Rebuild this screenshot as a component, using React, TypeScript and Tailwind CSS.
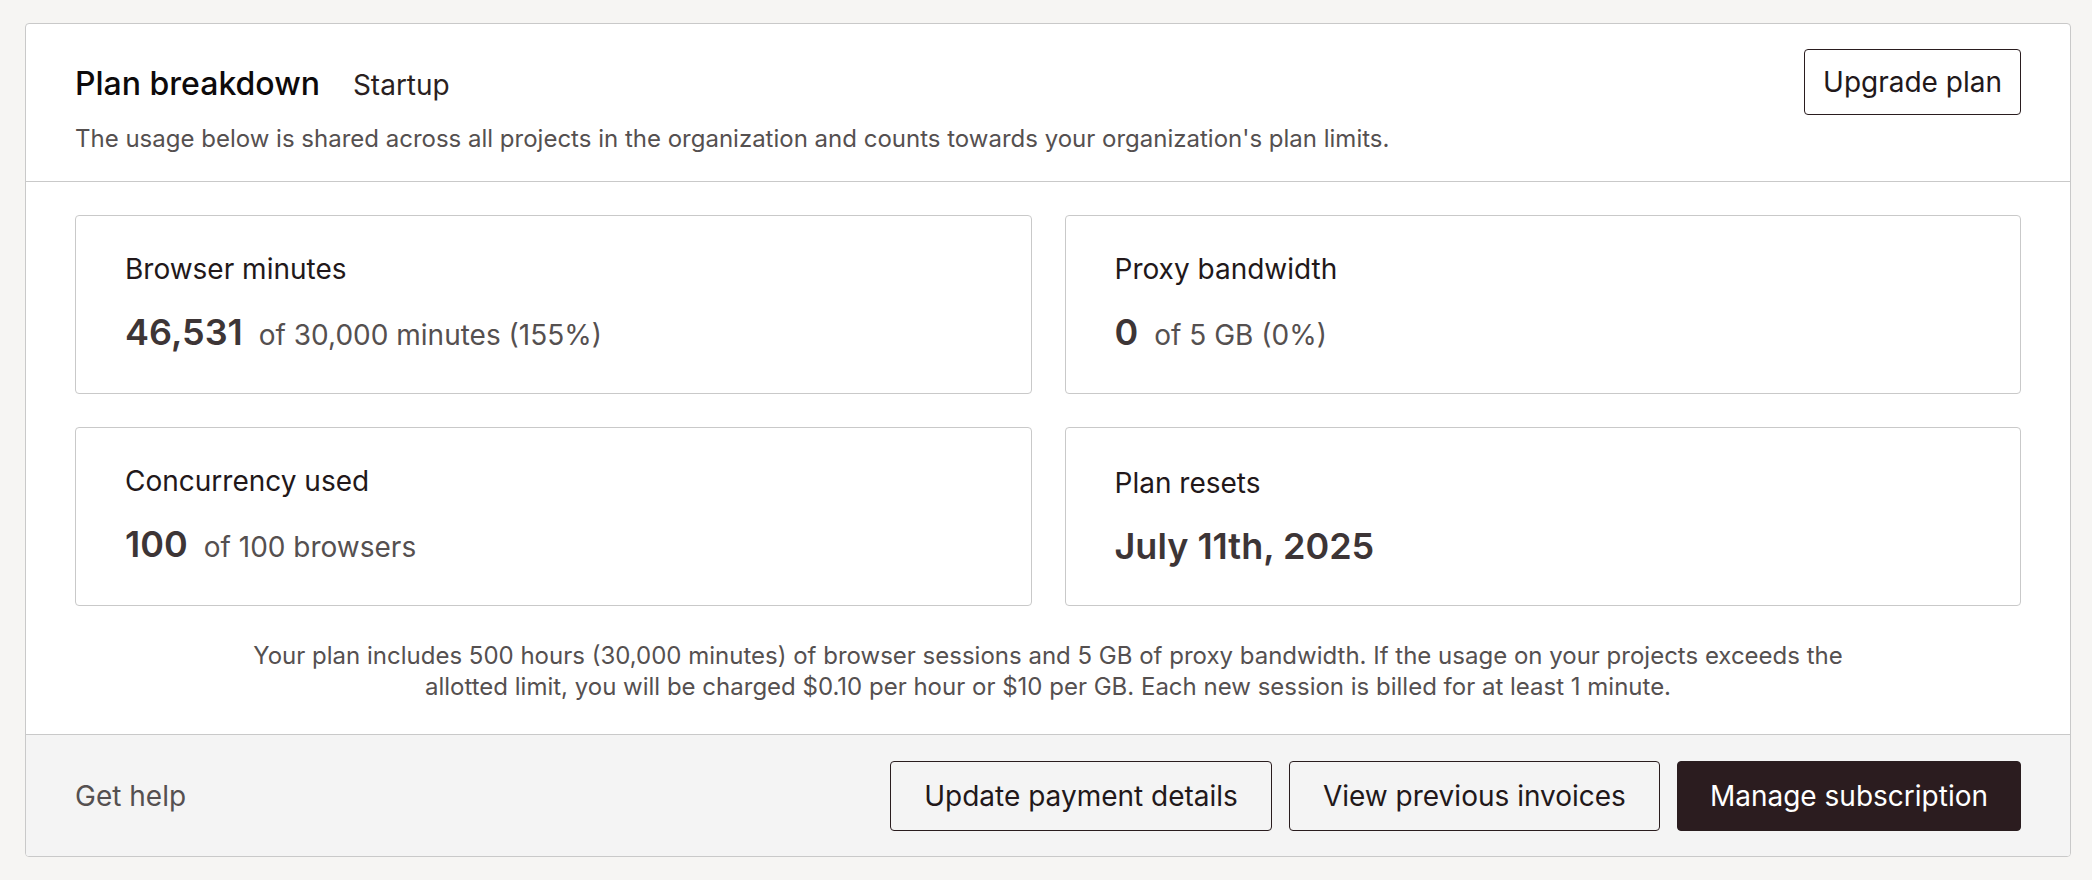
import React from "react";

type Stat = {
  label: string;
  value: string;
  rest?: string;
};

const stats: Stat[] = [
  { label: "Browser minutes", value: "46,531", rest: "of 30,000 minutes (155%)" },
  { label: "Proxy bandwidth", value: "0", rest: "of 5 GB (0%)" },
  { label: "Concurrency used", value: "100", rest: "of 100 browsers" },
  { label: "Plan resets", value: "July 11th, 2025" },
];

function StatCard({ label, value, rest }: Stat) {
  return (
    <div className="flex h-[179px] flex-col justify-center gap-[24px] rounded-[4px] border border-[#c9c9c9] bg-white px-[49px]">
      <div className="text-[28px] leading-[34px] text-[#22181a]">{label}</div>
      <div className="flex items-baseline gap-[16px]">
        <span className="text-[36px] font-semibold leading-[44px] text-[#3d3536]">
          {value}
        </span>
        {rest && (
          <span className="text-[28px] leading-[44px] text-[#555050]">{rest}</span>
        )}
      </div>
    </div>
  );
}

export default function App() {
  return (
    <div
      className="min-h-[880px] bg-[#f6f5f3] pl-[25px] pt-[23px]"
      style={{ fontFamily: "Inter, 'Noto Sans', sans-serif" }}
    >
      <div className="w-[2046px] overflow-hidden rounded-[4px] border border-[#c9c9c9] bg-white">
        {/* header */}
        <div className="flex h-[158px] items-start justify-between border-b border-[#c9c9c9] px-[49px] pt-[25px]">
          <div>
            <div className="flex items-baseline gap-[33px]">
              <h2 className="text-[32px] font-medium leading-[70px] text-[#0d0a0b]">
                Plan breakdown
              </h2>
              <span className="text-[28px] text-[#2a1f21]">Startup</span>
            </div>
            <p className="mt-[4px] text-[24px] leading-[32px] text-[#555050]">
              The usage below is shared across all projects in the organization and counts
              towards your organization's plan limits.
            </p>
          </div>
          <button className="h-[66px] rounded-[4px] border border-[#2a1d1f] px-[18px] text-[28px] text-[#22181a]">
            Upgrade plan
          </button>
        </div>

        {/* usage */}
        <div className="px-[49px] pt-[33px] pb-[32px]">
          <div className="grid grid-cols-2 gap-x-[33px] gap-y-[33px]">
            {stats.map((s) => (
              <StatCard key={s.label} {...s} />
            ))}
          </div>
          <p className="mx-auto mt-[34px] max-w-[1620px] text-center text-[24px] leading-[31px] text-[#555050]">
            Your plan includes 500 hours (30,000 minutes) of browser sessions and 5 GB of proxy
            bandwidth. If the usage on your projects exceeds the allotted limit, you will be
            charged $0.10 per hour or $10 per GB. Each new session is billed for at least 1
            minute.
          </p>
        </div>

        {/* footer */}
        <div className="flex h-[122px] items-center justify-between border-t border-[#c9c9c9] bg-[#f4f4f4] px-[49px]">
          <span className="text-[28px] text-[#555050]">Get help</span>
          <div className="flex gap-[17px]">
            <button className="h-[70px] rounded-[4px] border border-[#2a1d1f] px-[33px] text-[28px] text-[#22181a]">
              Update payment details
            </button>
            <button className="h-[70px] rounded-[4px] border border-[#2a1d1f] px-[33px] text-[28px] text-[#22181a]">
              View previous invoices
            </button>
            <button className="h-[70px] rounded-[4px] border border-[#2a1d1f] bg-[#2b1c1f] px-[32px] text-[28px] text-white">
              Manage subscription
            </button>
          </div>
        </div>
      </div>
    </div>
  );
}
